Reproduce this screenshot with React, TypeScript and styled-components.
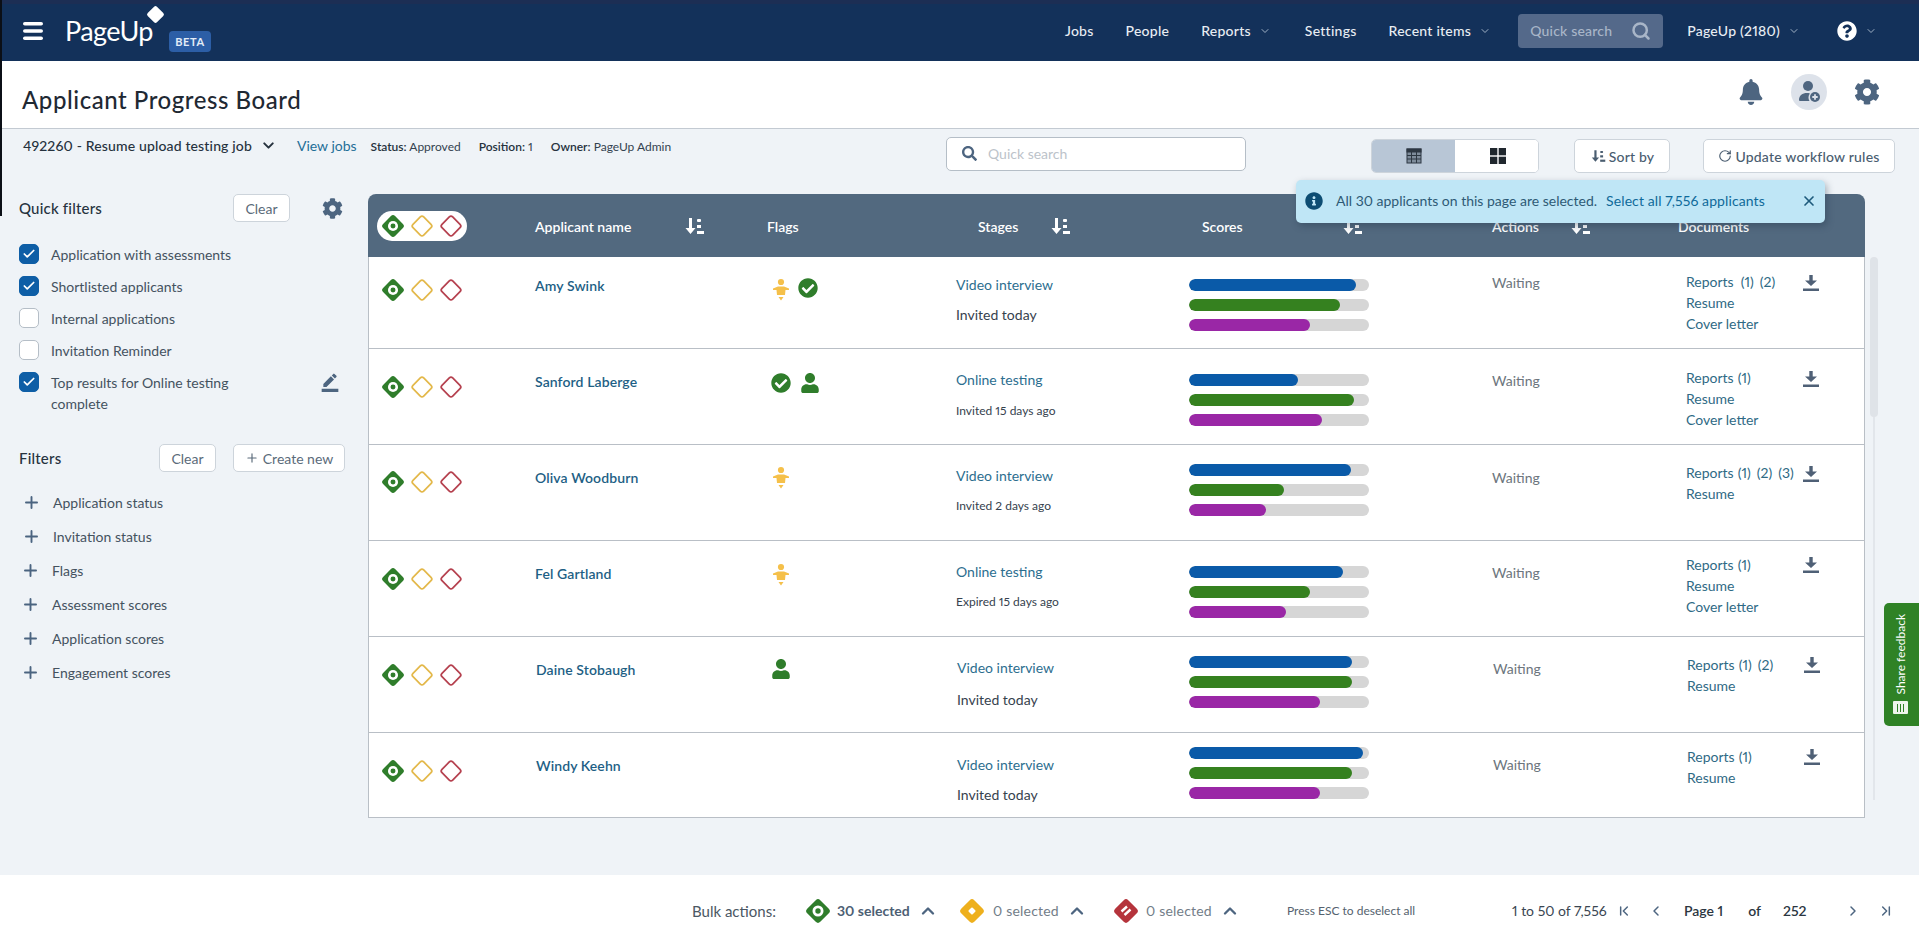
import React from "react";
import styled, { createGlobalStyle } from "styled-components";
import { ChevronDown, ChevronUp, ChevronLeft, ChevronRight, ChevronFirst, ChevronLast, Plus, RotateCw, Search, X, Check } from "lucide-react";
import { FaBell, FaCog, FaCheckCircle, FaInfoCircle, FaQuestionCircle, FaSearch, FaUser } from "react-icons/fa";
import { MdBorderColor } from "react-icons/md";

const Global = createGlobalStyle`
  html, body { margin: 0; padding: 0; height: 100%; overflow: hidden; }
  body { font-family: Lato, "Liberation Sans", sans-serif; font-size: 14px; color: #33424f; background: #eff3f7; font-variant-numeric: proportional-nums; }
  * { box-sizing: border-box; }
  #root { height: 100%; }
`;

const Page = styled.div`
  position: relative;
  height: 936px;
  display: flex;
  flex-direction: column;
  &::before {
    content: "";
    position: absolute;
    left: 0; top: 0;
    width: 2px; height: 216px;
    background: #0b0f16;
    z-index: 5;
  }
`;

/* ---------- top navigation ---------- */
const Nav = styled.header`
  flex: 0 0 61px;
  display: flex;
  align-items: center;
  padding: 0 42px 0 23px;
  background: #13315a;
  border-top: 4px solid #1c2e54;
  color: #eaeff4;
`;
const Burger = styled.svg`
  width: 20px; height: 20px; flex: none; margin-top: -4px;
`;
const Logo = styled.div`
  position: relative;
  margin-left: 22px;
  margin-top: -5px;
  font-size: 27px;
  font-weight: 400;
  letter-spacing: -0.6px;
  color: #fff;
  width: 104px;
`;
const LogoMark = styled.span`
  position: absolute;
  left: 84px; top: -6px;
  width: 13px; height: 13px;
  background: #fff;
  border-radius: 2px;
  transform: rotate(45deg);
`;
const Beta = styled.span`
  align-self: flex-start;
  margin-top: 27px;
  width: 42px; height: 21px;
  border-radius: 4px;
  background: #2c5ea6;
  color: #e3ecf7;
  font-size: 11px;
  font-weight: 700;
  letter-spacing: 0.6px;
  display: flex; align-items: center; justify-content: center;
`;
const NavRight = styled.nav`
  margin-left: auto;
  display: flex;
  align-items: center;
  margin-top: -4px;
`;
const NavItem = styled.span<{ $gap?: number }>`
  display: flex; align-items: center; gap: 8px;
  margin-left: ${(p) => p.$gap ?? 32}px;
  font-size: 14px; font-weight: 500;
  letter-spacing: 0.25px;
  color: #e8edf3;
  white-space: nowrap;
`;
const NavSearch = styled.div`
  width: 145px; height: 34px;
  margin-left: 27px;
  border-radius: 4px;
  background: #54698a;
  color: #a9b6c8;
  font-size: 14px; font-weight: 500;
  letter-spacing: 0.2px;
  display: flex; align-items: center; justify-content: space-between;
  padding: 0 12px;
`;

/* ---------- page title ---------- */
const TitleBar = styled.div`
  flex: 0 0 68px;
  display: flex; align-items: center;
  padding: 0 39px 0 22px;
  background: #fff;
  border-bottom: 1px solid #c3cad2;
`;
const Title = styled.h1`
  margin: 9px 0 0; font-size: 24px; font-weight: 500; color: #1f2933; letter-spacing: 0.55px;
`;
const TitleTools = styled.div`
  margin: -6px 0 0 auto; display: flex; align-items: center; gap: 27px; color: #4d6580;
`;
const AvatarChip = styled.div`
  position: relative;
  width: 36px; height: 36px; border-radius: 50%;
  background: #dde2ea;
  display: flex; align-items: center; justify-content: center;
`;

/* ---------- toolbar ---------- */
const Toolbar = styled.div`
  flex: 0 0 65px;
  display: flex; align-items: flex-start;
`;
const JobMeta = styled.div`
  flex: 0 0 946px;
  display: flex; align-items: center;
  padding: 2px 0 0 23px;
  height: 30px;
`;
const JobName = styled.span`
  font-size: 14px; font-weight: 500; letter-spacing: 0.15px; color: #26323e; white-space: nowrap;
`;
const ViewJobs = styled.a`
  margin-left: 20px; margin-right: 14px; font-size: 14px; color: #1f6f98; white-space: nowrap;
`;
const Meta = styled.span`
  margin-right: 18px; font-size: 12px; color: #33424f; white-space: nowrap; padding-top: 3px;
  b { font-weight: 600; color: #26323e; }
`;
const SearchBox = styled.div`
  width: 300px; height: 34px; margin-top: 8px;
  background: #fff;
  border: 1px solid #b5bec7; border-radius: 5px;
  display: flex; align-items: center; gap: 11px;
  padding: 0 0 2px 15px;
  color: #bcc3ca; font-size: 14px;
`;
const Toggle = styled.div`
  width: 168px; height: 34px; margin: 10px 0 0 125px;
  display: grid; grid-template-columns: 83px 85px;
  border: 1px solid #cdd4db; border-radius: 5px;
  overflow: hidden;
  background: #fff;
`;
const ToggleCell = styled.div<{ $on?: boolean }>`
  display: flex; align-items: center; justify-content: center;
  background: ${(p) => (p.$on ? "#b8c6d6" : "#fff")};
`;
const ToolButton = styled.button<{ $w: number; $ml: number }>`
  width: ${(p) => p.$w}px; height: 34px;
  margin: 10px 0 0 ${(p) => p.$ml}px;
  background: #fff;
  border: 1px solid #cdd4db; border-radius: 5px;
  font: 500 14px Lato, sans-serif;
  letter-spacing: 0.2px;
  color: #4a5d70;
  display: flex; align-items: center; justify-content: center; gap: 3px;
  padding: 0;
`;

/* ---------- workspace ---------- */
const Workspace = styled.main`
  flex: 1; display: flex; min-height: 0;
`;
const Sidebar = styled.aside`
  flex: 0 0 368px;
  padding: 0 23px 0 19px;
  display: flex; flex-direction: column;
`;
const SideHead = styled.div<{ $mt?: number }>`
  display: flex; align-items: center; height: 28px; margin-top: ${(p) => p.$mt ?? 0}px;
`;
const SideTitle = styled.h2<{ $w: number }>`
  margin: 0; width: ${(p) => p.$w}px; font-size: 15px; font-weight: 500; letter-spacing: 0.2px; color: #26323e;
`;
const Ghost = styled.button<{ $w: number; $ml?: number }>`
  width: ${(p) => p.$w}px; height: 28px; margin-left: ${(p) => p.$ml ?? 0}px;
  background: #fff;
  border: 1px solid #cdd4db; border-radius: 5px;
  font: 400 14px Lato, sans-serif; color: #5b6b7a;
  display: flex; align-items: center; justify-content: center; gap: 4px;
  padding: 0;
`;
const GearWrap = styled.span`
  display: flex; margin-left: 32px; color: #4d6580;
`;
const CheckList = styled.ul`
  list-style: none; margin: 22px 0 0; padding: 0;
`;
const CheckRow = styled.li<{ $tall?: boolean }>`
  display: flex; align-items: flex-start;
  min-height: ${(p) => (p.$tall ? 42 : 32)}px;
`;
const Box = styled.span<{ $on?: boolean }>`
  flex: none;
  width: 20px; height: 20px; border-radius: 5px;
  display: flex; align-items: center; justify-content: center;
  background: ${(p) => (p.$on ? "#0e5ea6" : "#fff")};
  border: 1px solid ${(p) => (p.$on ? "#0e5ea6" : "#b5bec7")};
  color: #fff;
`;
const CheckLabel = styled.span`
  margin-left: 12px; width: 200px; font-size: 14px; line-height: 21px; color: #44525f;
`;
const EditWrap = styled.span`
  margin-left: 69px; display: flex; color: #4d6580;
`;
const FilterList = styled.ul`
  list-style: none; margin: 13px 0 0; padding: 0;
`;
const FilterRow = styled.li<{ $in?: boolean }>`
  display: flex; align-items: center; height: 34px;
  padding-left: ${(p) => (p.$in ? 3 : 2)}px;
  gap: 12px;
  font-size: 14px; color: #44525f;
  svg { color: #4b6480; }
`;

/* ---------- board ---------- */
const Board = styled.section`
  position: relative;
  flex: 0 0 1497px;
  align-self: flex-start;
`;
const Head = styled.div`
  height: 63px;
  background: #52697f;
  border-radius: 8px 8px 0 0;
  display: grid;
  grid-template-columns: 167px 232px 211px 224px 290px 186px 1fr;
  align-items: center;
  padding-top: 1px;
  color: #fff;
  font-size: 14px; font-weight: 600;
`;
const HeadCell = styled.div<{ $sort?: number; $pad?: number }>`
  display: flex; align-items: center;
  padding-left: ${(p) => p.$pad ?? 0}px;
  white-space: nowrap;
  & > svg { margin-left: ${(p) => p.$sort ?? 0}px; }
`;
const Pill = styled.div`
  margin-left: 9px;
  width: 90px; height: 30px; border-radius: 15px; background: #fff;
  display: flex; align-items: center; padding-left: 5px; gap: 7px;
`;
const Banner = styled.div`
  position: absolute;
  left: 928px; top: -14px;
  width: 529px; height: 43px;
  background: #bfe6f6;
  border-radius: 5px;
  box-shadow: 2px 3px 7px rgba(30, 50, 70, 0.35);
  display: flex; align-items: center;
  padding: 0 0 2px 9px;
  font-size: 14px; color: #2e5a75;
  z-index: 3;
  a { margin-left: 9px; color: #0f6a9a; letter-spacing: 0.1px; }
`;
const BannerInfo = styled.span`
  display: flex; color: #0d4d73; margin-right: 13px;
`;
const BannerClose = styled.span`
  display: flex; margin-left: auto; margin-right: 8px; color: #1d5a7c;
`;
const Row = styled.div<{ $h: number; $shift?: boolean }>`
  height: ${(p) => p.$h}px;
  background: #fff;
  border: 1px solid #b9bfc6;
  border-width: 0 1px 1px 1px;
  display: grid;
  grid-template-columns: ${(p) => (p.$shift ? "167px 228px 193px 231px 305px 194px 1fr" : "166px 228px 193px 232px 304px 194px 1fr")};
  align-items: start;
`;
const Cell = styled.div<{ $t: number }>`
  padding-top: ${(p) => p.$t}px;
`;
const DiamondSet = styled(Cell)`
  display: flex; gap: 7px; padding-left: 13px;
`;
const Name = styled.a`
  font-weight: 600; font-size: 14px; line-height: 20px; letter-spacing: 0.1px; color: #1e5f85; white-space: nowrap; display: block;
`;
const Flags = styled(Cell)<{ $pad: number }>`
  display: flex; gap: 7px; padding-left: ${(p) => p.$pad}px; height: 60px;
  align-items: flex-start;
`;
const StageLink = styled.a`
  display: block; font-size: 14px; line-height: 20px; color: #2c6e8f; white-space: nowrap;
`;
const StageNote = styled.div<{ $small?: boolean; $gap: number }>`
  margin-top: ${(p) => p.$gap}px;
  font-size: ${(p) => (p.$small ? 12 : 14)}px; line-height: 20px; color: #36424e; white-space: nowrap;
`;
const Bars = styled(Cell)`
  display: flex; flex-direction: column; gap: 8px; width: 180px; margin-left: 1px;
`;
const Track = styled.div`
  height: 12px; border-radius: 6px; background: #d6d6d6; overflow: hidden;
`;
const Fill = styled.div<{ $c: string }>`
  height: 100%; border-radius: 6px; background: ${(p) => p.$c};
`;
const Waiting = styled(Cell)`
  font-size: 14px; line-height: 20px; color: #6c757d;
`;
const Docs = styled(Cell)`
  display: grid; grid-template-columns: 117px 16px; color: #2f6a85;
`;
const DocList = styled.div`
  font-size: 14px; line-height: 21px; white-space: nowrap;
`;
const DocLine = styled.div`
  display: flex;
`;
const Num = styled.span<{ $ml: number }>`
  margin-left: ${(p) => p.$ml}px;
`;
const DownloadWrap = styled.span<{ $t: number }>`
  display: block; margin-top: ${(p) => p.$t}px; height: 16px;
`;

const Gutter = styled.div`
  width: 8px; height: 543px; margin: 63px 0 0 5px;
  background: linear-gradient(#e2e6eb, #e2e6eb) center / 2px 100% no-repeat;
`;
const Thumb = styled.div`
  height: 160px; border-radius: 4px; background: #dfe3e8;
`;
const Feedback = styled.aside`
  position: absolute;
  right: 0; top: 603px;
  width: 35px; height: 123px;
  background: #2f8226;
  border-radius: 5px 0 0 5px;
  display: flex; flex-direction: column-reverse; align-items: center;
  padding-bottom: 12px; gap: 6px;
  color: #fff; font-size: 12px;
`;
const FeedbackText = styled.span`
  writing-mode: vertical-rl;
  transform: rotate(180deg);
  white-space: nowrap;
  margin-right: 3px;
`;
const FeedbackIcon = styled.span`
  width: 15px; height: 13px; margin-right: 3px; background: #eef5ec; border-radius: 1px;
  display: flex; align-items: center; justify-content: center; gap: 2px;
  i { width: 1px; height: 8px; background: #2f8226; }
`;

/* ---------- footer ---------- */
const Footer = styled.footer`
  flex: 0 0 61px;
  background: #fff;
  display: flex; align-items: center;
  padding: 10px 0 0 692px;
  color: #4e5b68;
`;
const BulkLabel = styled.span`
  width: 114px; font-size: 15px; color: #4b5763;
`;
const BulkGroup = styled.div<{ $w: number; $gap: number }>`
  width: ${(p) => p.$w}px;
  display: flex; align-items: center;
  & > span { margin-left: ${(p) => p.$gap}px; }
  & > svg:last-child { margin-left: 8px; color: #4d6580; }
`;
const BulkCount = styled.span<{ $strong?: boolean }>`
  font-size: 14px;
  letter-spacing: ${(p) => (p.$strong ? 0 : 0.2)}px;
  font-weight: ${(p) => (p.$strong ? 700 : 400)};
  color: ${(p) => (p.$strong ? "#4d6074" : "#727d88")};
`;
const EscHint = styled.span`
  width: 225px; font-size: 12px; color: #55626e;
`;
const RangeText = styled.span`
  width: 104px; font-size: 14px; color: #3a4652; white-space: nowrap;
`;
const PageNav = styled.span<{ $ml: number }>`
  display: flex; margin-left: ${(p) => p.$ml}px; color: #4d6580;
`;
const PageText = styled.span<{ $ml: number }>`
  margin-left: ${(p) => p.$ml}px; font-size: 14px; font-weight: 600; color: #2b3641; white-space: nowrap;
`;

/* ---------- drawn icons ---------- */
const GREEN = "#2f7d2b";
const DiamondFilled = ({ size = 22, color = GREEN }: { size?: number; color?: string }) => (
  <svg width={size} height={size} viewBox="0 0 24 24">
    <rect x="2.750" y="2.750" width="18.500" height="18.500" rx="3.200" transform="rotate(45 12 12)" fill={color} />
    <circle cx="12" cy="12" r="5.500" fill="#fff" />
    <circle cx="12" cy="12" r="2.700" fill={color} />
  </svg>
);
const DiamondLine = ({ color }: { color: string }) => (
  <svg width="22" height="22" viewBox="0 0 24 24">
    <rect x="3.750" y="3.750" width="16.500" height="16.500" rx="2.600" transform="rotate(45 12 12)" fill="none" stroke={color} strokeWidth="1.900" />
  </svg>
);
const DiamondYellow = () => (
  <svg width="24" height="24" viewBox="0 0 24 24">
    <rect x="2.750" y="2.750" width="18.500" height="18.500" rx="3.200" transform="rotate(45 12 12)" fill="#eeb01d" />
    <rect x="9.200" y="9.200" width="5.600" height="5.600" rx="1" transform="rotate(45 12 12)" fill="#fff" />
  </svg>
);
const DiamondRed = () => (
  <svg width="24" height="24" viewBox="0 0 24 24">
    <rect x="2.750" y="2.750" width="18.500" height="18.500" rx="3.200" transform="rotate(45 12 12)" fill="#b5343c" />
    <path d="M7.500 12.500 L13 7.500 M10.500 16 L16.500 10.500" stroke="#fff" strokeWidth="2.400" />
  </svg>
);
const SortIcon = ({ color = "#fff", size = 22 }: { color?: string; size?: number }) => (
  <svg width={size} height={size} viewBox="0 0 22 22" fill={color}>
    <path d="M6 3h3v10h3.500L7.500 19 2.500 13H6z" />
    <rect x="14" y="4" width="4" height="3" rx="1" />
    <rect x="14" y="10" width="4" height="3" />
    <rect x="14" y="16" width="7" height="3" />
  </svg>
);
const DownloadIcon = () => (
  <svg width="16" height="16" viewBox="0 0 16 16" fill="#4f6076">
    <path d="M6.300 0h3.400v5.500H14L8 11 2 5.500h4.300z" />
    <rect y="13.500" width="16" height="2.500" x="0" />
  </svg>
);
const Dress = () => (
  <svg width="20" height="24" viewBox="0 0 20 24" fill="#f5c04a">
    <circle cx="10" cy="4" r="3.100" />
    <path d="M2 10.500 L7 8.500 H13 L18 10.500 L18 12 L14.500 12 L14 17 H6 L5.500 12 L2 12Z" />
    <path d="M7.500 19 H12.500 L10 22.500Z" />
  </svg>
);
const TableIcon = () => (
  <svg width="16" height="16" viewBox="0 0 16 16" fill="none" stroke="#2c3742" strokeWidth="1">
    <rect x="1" y="1" width="14" height="14" fill="#7e8c9b" />
    <rect x="1" y="1" width="14" height="3" fill="#2c3742" />
    <path d="M1 7.500h14M1 11h14M5.500 4v11M10.500 4v11" />
  </svg>
);
const TilesIcon = () => (
  <svg width="16" height="16" viewBox="0 0 16 16" fill="#20272e">
    <rect x="0" y="0" width="7.300" height="7.300" />
    <rect x="8.700" y="0" width="7.300" height="7.300" />
    <rect x="0" y="8.700" width="7.300" height="7.300" />
    <rect x="8.700" y="8.700" width="7.300" height="7.300" />
  </svg>
);
const PersonAdd = () => (
  <svg width="26" height="26" viewBox="0 0 26 26" fill="#4f6680">
    <circle cx="12" cy="7" r="5" />
    <path d="M3 21c0-4.500 3.500-7 8-7 1 0 2 .1 2.900.4A7 7 0 0 0 13.500 22H4a1 1 0 0 1-1-1z" />
    <circle cx="19" cy="18" r="5" />
    <path d="M19 15.300v5.400M16.300 18h5.400" stroke="#dde2ea" strokeWidth="1.800" />
  </svg>
);

const COLORS = ["#0a5aa8", "#35811f", "#9a27a6"];
type Sc = [number, number, number];
interface Applicant {
  h: number; shift?: boolean; name: string; flags: React.ReactNode[]; flagPad: number;
  stage: string; note: string; small?: boolean; noteGap: number;
  scores: Sc; nums: number[]; firstGap: number; docs: string[]; iconTop: number;
  t: { d: number; n: number; f: number; s: number; b: number; w: number; o: number };
}
const check = <FaCheckCircle key="c" size={20} color={GREEN} />;
const person = <FaUser key="p" size={20} color={GREEN} style={{ marginLeft: 2 }} />;
const dress = <Dress key="d" />;

const applicants: Applicant[] = [
  { h: 92, name: "Amy Swink", flags: [dress, check], flagPad: 8, stage: "Video interview", note: "Invited today", noteGap: 10,
    scores: [167, 151, 121], nums: [1, 2], firstGap: 7, docs: ["Resume", "Cover letter"], iconTop: 4,
    t: { d: 22, n: 19, f: 21, s: 18, b: 22, w: 16, o: 14 } },
  { h: 96, name: "Sanford Laberge", flags: [check, person], flagPad: 8, stage: "Online testing", note: "Invited 15 days ago", small: true, noteGap: 11,
    scores: [109, 165, 133], nums: [1], firstGap: 4, docs: ["Resume", "Cover letter"], iconTop: 4,
    t: { d: 27, n: 23, f: 24, s: 21, b: 25, w: 22, o: 18 } },
  { h: 96, name: "Oliva Woodburn", flags: [dress], flagPad: 8, stage: "Video interview", note: "Invited 2 days ago", small: true, noteGap: 10,
    scores: [162, 95, 77], nums: [1, 2, 3], firstGap: 4, docs: ["Resume"], iconTop: 4,
    t: { d: 26, n: 23, f: 21, s: 21, b: 19, w: 23, o: 17 } },
  { h: 96, name: "Fel Gartland", flags: [dress], flagPad: 8, stage: "Online testing", note: "Expired 15 days ago", small: true, noteGap: 10,
    scores: [154, 121, 97], nums: [1], firstGap: 4, docs: ["Resume", "Cover letter"], iconTop: 3,
    t: { d: 27, n: 23, f: 22, s: 21, b: 25, w: 22, o: 13 } },
  { h: 96, shift: true, name: "Daine Stobaugh", flags: [person], flagPad: 5, stage: "Video interview", note: "Invited today", noteGap: 12,
    scores: [163, 163, 131], nums: [1, 2], firstGap: 4, docs: ["Resume"], iconTop: 3,
    t: { d: 27, n: 23, f: 22, s: 21, b: 19, w: 22, o: 17 } },
  { h: 85, shift: true, name: "Windy Keehn", flags: [], flagPad: 8, stage: "Video interview", note: "Invited today", noteGap: 10,
    scores: [174, 163, 131], nums: [1], firstGap: 4, docs: ["Resume"], iconTop: 3,
    t: { d: 27, n: 23, f: 21, s: 22, b: 14, w: 22, o: 13 } },
];

const quick = [
  { label: "Application with assessments", on: true },
  { label: "Shortlisted applicants", on: true },
  { label: "Internal applications", on: false },
  { label: "Invitation Reminder", on: false },
];
const filters = ["Application status", "Invitation status", "Flags", "Assessment scores", "Application scores", "Engagement scores"];

export default function App() {
  return (
    <Page>
      <Global />
      <Nav>
        <Burger viewBox="0 0 20 20" fill="#fff">
          <rect x="0" y="1" width="20" height="3.600" rx="1.800" />
          <rect x="0" y="8.200" width="20" height="3.600" rx="1.800" />
          <rect x="0" y="15.400" width="20" height="3.600" rx="1.800" />
        </Burger>
        <Logo>PageUp<LogoMark /></Logo>
        <Beta>BETA</Beta>
        <NavRight>
          <NavItem>Jobs</NavItem>
          <NavItem>People</NavItem>
          <NavItem>Reports <ChevronDown size={12} color="#9fb0c4" /></NavItem>
          <NavItem $gap={34}>Settings</NavItem>
          <NavItem>Recent items <ChevronDown size={12} color="#9fb0c4" /></NavItem>
          <NavSearch>Quick search <Search size={20} strokeWidth={3} color="#a9b6c8" /></NavSearch>
          <NavItem $gap={24}>PageUp (2180) <ChevronDown size={12} color="#9fb0c4" /></NavItem>
          <NavItem $gap={37}><FaQuestionCircle size={20} color="#fff" /> <ChevronDown size={12} color="#9fb0c4" /></NavItem>
        </NavRight>
      </Nav>

      <TitleBar>
        <Title>Applicant Progress Board</Title>
        <TitleTools>
          <FaBell size={26} />
          <AvatarChip><PersonAdd /></AvatarChip>
          <FaCog size={26} />
        </TitleTools>
      </TitleBar>

      <Toolbar>
        <JobMeta>
          <JobName>492260 - Resume upload testing job</JobName>
          <ChevronDown size={17} strokeWidth={2.800} color="#26323e" style={{ marginLeft: 8 }} />
          <ViewJobs>View jobs</ViewJobs>
          <Meta><b>Status:</b> Approved</Meta>
          <Meta><b>Position:</b> 1</Meta>
          <Meta><b>Owner:</b> PageUp Admin</Meta>
        </JobMeta>
        <SearchBox><FaSearch size={15} color="#4d6580" /> Quick search</SearchBox>
        <Toggle>
          <ToggleCell $on><TableIcon /></ToggleCell>
          <ToggleCell><TilesIcon /></ToggleCell>
        </Toggle>
        <ToolButton $w={96} $ml={35}><SortIcon color="#4a5d70" size={16} /> Sort by</ToolButton>
        <ToolButton $w={192} $ml={33}><RotateCw size={14} strokeWidth={2} /> Update workflow rules</ToolButton>
      </Toolbar>

      <Workspace>
        <Sidebar>
          <SideHead>
            <SideTitle $w={214}>Quick filters</SideTitle>
            <Ghost $w={57}>Clear</Ghost>
            <GearWrap><FaCog size={21} /></GearWrap>
          </SideHead>
          <CheckList>
            {quick.map((q) => (
              <CheckRow key={q.label}>
                <Box $on={q.on}>{q.on && <Check size={14} strokeWidth={3} />}</Box>
                <CheckLabel>{q.label}</CheckLabel>
              </CheckRow>
            ))}
            <CheckRow $tall>
              <Box $on><Check size={14} strokeWidth={3} /></Box>
              <CheckLabel>Top results for Online testing complete</CheckLabel>
              <EditWrap><MdBorderColor size={20} /></EditWrap>
            </CheckRow>
          </CheckList>
          <SideHead $mt={30}>
            <SideTitle $w={140}>Filters</SideTitle>
            <Ghost $w={57}>Clear</Ghost>
            <Ghost $w={112} $ml={17}><Plus size={14} /> Create new</Ghost>
          </SideHead>
          <FilterList>
            {filters.map((f, i) => (
              <FilterRow key={f} $in={i < 2}><Plus size={19} strokeWidth={2.400} /> {f}</FilterRow>
            ))}
          </FilterList>
        </Sidebar>

        <Board>
          <Head>
            <HeadCell>
              <Pill>
                <DiamondFilled />
                <DiamondLine color="#e3b84a" />
                <DiamondLine color="#b5414f" />
              </Pill>
            </HeadCell>
            <HeadCell $sort={52}>Applicant name <SortIcon /></HeadCell>
            <HeadCell>Flags</HeadCell>
            <HeadCell $sort={31}>Stages <SortIcon /></HeadCell>
            <HeadCell $sort={98}>Scores <SortIcon /></HeadCell>
            <HeadCell $sort={30}>Actions <SortIcon /></HeadCell>
            <HeadCell>Documents</HeadCell>
          </Head>
          <Banner>
            <BannerInfo><FaInfoCircle size={18} /></BannerInfo>
            All 30 applicants on this page are selected.
            <a>Select all 7,556 applicants</a>
            <BannerClose><X size={16} strokeWidth={2.500} /></BannerClose>
          </Banner>
          {applicants.map((a) => (
            <Row key={a.name} $h={a.h} $shift={a.shift}>
              <DiamondSet $t={a.t.d}>
                <DiamondFilled />
                <DiamondLine color="#e3b84a" />
                <DiamondLine color="#b5414f" />
              </DiamondSet>
              <Cell $t={a.t.n}><Name>{a.name}</Name></Cell>
              <Flags $t={a.t.f} $pad={a.flagPad}>{a.flags}</Flags>
              <Cell $t={a.t.s}>
                <StageLink>{a.stage}</StageLink>
                <StageNote $small={a.small} $gap={a.noteGap}>{a.note}</StageNote>
              </Cell>
              <Bars $t={a.t.b}>
                {a.scores.map((w, i) => (
                  <Track key={i}><Fill $c={COLORS[i]} style={{ width: w }} /></Track>
                ))}
              </Bars>
              <Waiting $t={a.t.w}>Waiting</Waiting>
              <Docs $t={a.t.o}>
                <DocList>
                  <DocLine>
                    Reports
                    {a.nums.map((n, i) => (
                      <Num key={n} $ml={i === 0 ? a.firstGap : 6}>({n})</Num>
                    ))}
                  </DocLine>
                  {a.docs.map((d) => <DocLine key={d}>{d}</DocLine>)}
                </DocList>
                <DownloadWrap $t={a.iconTop}><DownloadIcon /></DownloadWrap>
              </Docs>
            </Row>
          ))}
        </Board>
        <Gutter><Thumb /></Gutter>
      </Workspace>

      <Feedback>
        <FeedbackIcon><i /><i /><i /></FeedbackIcon>
        <FeedbackText>Share feedback</FeedbackText>
      </Feedback>

      <Footer>
        <BulkLabel>Bulk actions:</BulkLabel>
        <BulkGroup $w={154} $gap={7}>
          <DiamondFilled size={24} />
          <BulkCount $strong>30 selected</BulkCount>
          <ChevronUp size={20} strokeWidth={2.800} />
        </BulkGroup>
        <BulkGroup $w={154} $gap={9}>
          <DiamondYellow />
          <BulkCount>0 selected</BulkCount>
          <ChevronUp size={20} strokeWidth={2.800} />
        </BulkGroup>
        <BulkGroup $w={173} $gap={8}>
          <DiamondRed />
          <BulkCount>0 selected</BulkCount>
          <ChevronUp size={20} strokeWidth={2.800} />
        </BulkGroup>
        <EscHint>Press ESC to deselect all</EscHint>
        <RangeText>1 to 50 of 7,556</RangeText>
        <PageNav $ml={0}><ChevronFirst size={16} strokeWidth={2.200} /></PageNav>
        <PageNav $ml={16}><ChevronLeft size={16} strokeWidth={2.200} /></PageNav>
        <PageText $ml={20}>Page 1</PageText>
        <PageText $ml={25}>of</PageText>
        <PageText $ml={22}>252</PageText>
        <PageNav $ml={38}><ChevronRight size={16} strokeWidth={2.200} /></PageNav>
        <PageNav $ml={17}><ChevronLast size={16} strokeWidth={2.200} /></PageNav>
      </Footer>
    </Page>
  );
}
